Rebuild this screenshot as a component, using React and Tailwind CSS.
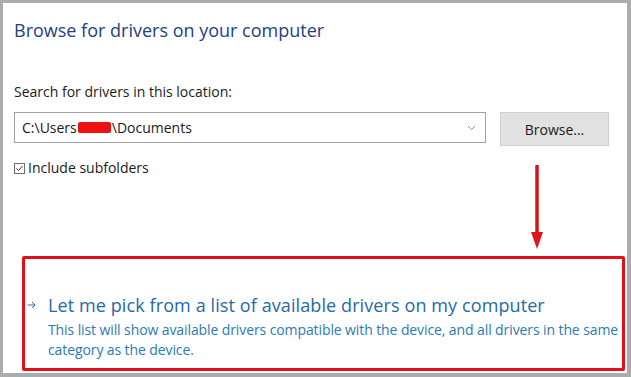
import React from 'react';

const font = { fontFamily: '"Open Sans", "Noto Sans", sans-serif' };

export default function App() {
  return (
    <div className="w-[631px] h-[377px] bg-[#acacac] pt-[3px] pl-[3px] pr-[4px] pb-[4px]" style={font}>
      <div className="relative w-full h-full bg-white pl-[11px] pt-[15px]">
        {/* Title */}
        <h1 className="text-[18px] leading-[24px] text-[#23427f]">
          Browse for drivers on your computer
        </h1>

        {/* Location */}
        <p className="mt-[41px] text-[14px] leading-[18px] text-[#1a1a1a]">
          Search for drivers in this location:
        </p>
        <div className="mt-[11px] flex items-start">
          <div className="w-[472px] h-[31px] border border-[#a0a0a0] flex items-center pl-[7px] pr-[9px] text-[14px] text-[#1a1a1a]">
            <span>C:\Users</span>
            <span className="inline-block w-[33px] h-[11px] bg-[#ee1111] rounded-[2px] mx-[1px]"></span>
            <span>\Documents</span>
            <svg className="ml-auto" width="9" height="6" viewBox="0 0 9 6">
              <path d="M1 1 L4.5 4.5 L8 1" fill="none" stroke="#8a8a8a" strokeWidth="1" />
            </svg>
          </div>
          <button className="ml-[14px] w-[109px] h-[34px] bg-[#e1e1e1] border border-[#d0d0d0] text-[14px] text-[#1a1a1a]">
            Browse...
          </button>
        </div>

        {/* Subfolders */}
        <div className="mt-[13px] flex items-center text-[14px] leading-[18px] text-[#1a1a1a]">
          <span className="w-[11px] h-[11px] border border-[#6d6d6d] flex items-center justify-center mr-[3px]">
            <svg width="9" height="9" viewBox="0 0 9 9">
              <path d="M1.5 4.5 L3.5 6.5 L7.5 2" fill="none" stroke="#333" strokeWidth="1" />
            </svg>
          </span>
          Include subfolders
        </div>

        {/* Annotation arrow */}
        <svg className="absolute left-[527px] top-[162px]" width="14" height="84" viewBox="0 0 14 84">
          <path d="M7 1 L7 70" stroke="#d7141a" strokeWidth="3.5" strokeLinecap="round" />
          <path d="M1 67 L13 67 L7 84 Z" fill="#e0141a" />
        </svg>

        {/* Highlighted option */}
        <div className="absolute left-[19px] top-[253px] w-[603px] h-[115px] border-[3px] border-[#e3101a] rounded-[2px] pl-[1px] pt-[34px]">
          <div className="flex items-center text-[#1f6aa8]">
            <svg className="mr-[12px] ml-[1px]" width="9" height="8" viewBox="0 0 9 8">
              <path d="M0.5 4 L8 4 M5 1 L8 4 L5 7" fill="none" stroke="#2a6fb0" strokeWidth="1" />
            </svg>
            <span className="text-[18px] leading-[24px] tracking-[0.1px]">
              Let me pick from a list of available drivers on my computer
            </span>
          </div>
          <p className="ml-[22px] mt-[3px] text-[14px] leading-[20px] text-[#2a7ab6] tracking-[-0.1px]">
            This list will show available drivers compatible with the device, and all drivers in the same
            <br />
            category as the device.
          </p>
        </div>
      </div>
    </div>
  );
}
